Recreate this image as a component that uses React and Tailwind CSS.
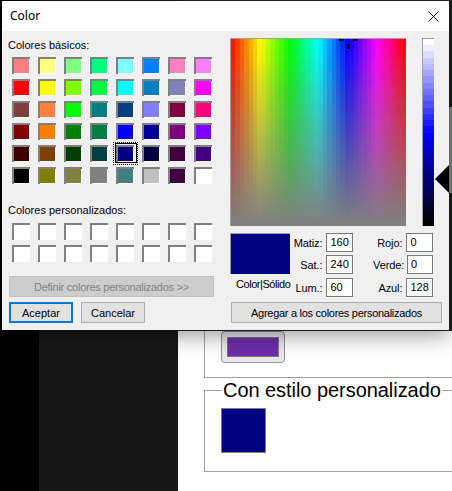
const BASIC = [
  ['#FF8080','#FFFF80','#80FF80','#00FF80','#80FFFF','#0080FF','#FF80C0','#FF80FF'],
  ['#FF0000','#FFFF00','#80FF00','#00FF40','#00FFFF','#0080C0','#8080C0','#FF00FF'],
  ['#804040','#FF8040','#00FF00','#008080','#004080','#8080FF','#800040','#FF0080'],
  ['#800000','#FF8000','#008000','#008040','#0000FF','#0000A0','#800080','#8000FF'],
  ['#400000','#804000','#004000','#004040','#000080','#000040','#400040','#400080'],
  ['#000000','#808000','#808040','#808080','#408080','#C0C0C0','#400040','#FFFFFF'],
];

function Swatch({ color, selected }) {
  return (
    <div className="relative w-[18px] h-[17px] shadow-[inset_2px_2px_0_#808080,inset_-1px_-1px_0_#ffffff]" style={{ backgroundColor: color }}>
      {selected && (
        <>
          <div className="absolute -left-[1px] -top-[2px] -right-[3px] -bottom-[1px] border border-black" />
          <div className="absolute -left-[3px] -top-[3px] -right-[4px] -bottom-[3px] border border-dotted border-black" />
        </>
      )}
    </div>
  );
}

function Spectrum() {
  const cols = 40, rows = 40, W = 175, H = 187;
  const cells = [];
  for (let r = 0; r < rows; r++) {
    for (let c = 0; c < cols; c++) {
      const x0 = Math.round((c * W) / cols), x1 = Math.round(((c + 1) * W) / cols);
      const y0 = Math.round((r * H) / rows), y1 = Math.round(((r + 1) * H) / rows);
      cells.push(
        <rect key={r + '-' + c} x={x0} y={y0} width={x1 - x0} height={y1 - y0}
          fill={`hsl(${(c / cols) * 360 + 4.5} ${100 - (r / (rows - 1)) * 100}% 50%)`} />
      );
    }
  }
  return (
    <div className="relative w-[176px] h-[188px] border-t border-l border-t-[#a0a0a0] border-l-[#a0a0a0]">
      <svg width="175" height="187" viewBox="0 0 175 187" shapeRendering="crispEdges" className="block">
        {cells}
        <rect x="108" y="0" width="5" height="2" fill="#000" />
        <rect x="122" y="0" width="5" height="2" fill="#000" />
        <rect x="116" y="5" width="3" height="5" fill="#000" />
      </svg>
    </div>
  );
}

function LumBar() {
  const n = 30;
  const bands = [];
  for (let i = 0; i < n; i++) {
    const y0 = Math.round((i * 187) / n), y1 = Math.round(((i + 1) * 187) / n);
    bands.push(<rect key={i} x="0" y={y0} width="11" height={y1 - y0} fill={`hsl(240 100% ${100 - (i / (n - 1)) * 100}%)`} />);
  }
  return (
    <div className="relative w-[12px] h-[188px] ml-[16px] border-t border-l border-t-[#a0a0a0] border-l-[#a0a0a0]">
      <svg width="11" height="187" viewBox="0 0 11 187" shapeRendering="crispEdges" className="block">{bands}</svg>
      <svg width="15" height="28" viewBox="0 0 15 28" className="absolute left-[12px] top-[126px]">
        <path d="M0 14 L14 0 L14 28 Z" fill="#000" />
      </svg>
    </div>
  );
}

function Field({ label, value }) {
  return (
    <div className="flex items-center justify-end">
      <span className="mr-[4px] w-[30px] text-right tracking-[-0.1px] whitespace-nowrap">{label}</span>
      <div className="w-[27px] h-[19px] border border-[#7a7a7a] bg-white pl-[3px] leading-[17px]">{value}</div>
    </div>
  );
}

export default function App() {
  return (
    <div className="relative w-[452px] h-[491px] overflow-hidden flex bg-white" style={{ fontFamily: '"Liberation Sans", Arial, sans-serif' }}>
      <div className="w-[39px] bg-black" />
      <div className="w-[139px] bg-[#171717]" />
      <div className="flex-1 min-w-0 flex flex-col bg-white">
        <div className="h-[107px] bg-[#1f1f1f]" />
        <div className="h-[86px] bg-[#8a8a8a]" />
        <div className="h-[138px] bg-[#1f1f1f]" />
        <div className="ml-[26px] w-[300px] h-[47px] border-l border-b border-r border-[#a0a0a0] pl-[16px]">
          <div className="w-[64px] h-[32px] rounded-[4px] border border-[#8f8f9d] bg-[#e9e9ed] p-[5px]">
            <div className="w-full h-full border border-[#767676] bg-[#6f2dab]" />
          </div>
        </div>
        <fieldset className="ml-[26px] mt-[1px] w-[300px] h-[93px] border border-[#a0a0a0] pl-[16px]">
          <legend className="ml-[1px] px-[1px] text-[20px] leading-[23px] tracking-[-0.05px] text-black">Con estilo personalizado</legend>
          <div className="mt-[6px] w-[45px] h-[45px] border border-[#808080] bg-[#000080]" />
        </fieldset>
      </div>

      <div className="absolute left-[2px] top-[1px] w-[447px] h-[329px] flex flex-col bg-[#f0f0f0] text-[11px] leading-[14px] text-black shadow-[0_4px_22px_rgba(0,0,0,0.45)]">
        <div className="h-[30px] bg-white flex items-center justify-between pl-[8px] pr-[10px]">
          <span className="text-[12px]" style={{ fontFamily: '"Noto Sans", sans-serif' }}>Color</span>
          <svg width="11" height="11" viewBox="0 0 11 11"><path d="M0.5 0.5 L10.5 10.5 M10.5 0.5 L0.5 10.5" stroke="#000" strokeWidth="1" fill="none" /></svg>
        </div>
        <div className="flex-1 flex">
          <div className="w-[228px] pl-[6px] pt-[7px]">
            <div>Colores básicos:</div>
            <div className="mt-[5px] ml-[4px] grid grid-cols-[repeat(8,18px)] gap-x-[8px] gap-y-[5px]">
              {BASIC.flat().map((c, i) => <Swatch key={i} color={c} selected={i === 36} />)}
            </div>
            <div className="mt-[19px]">Colores personalizados:</div>
            <div className="mt-[6px] ml-[4px] grid grid-cols-[repeat(8,18px)] gap-x-[8px] gap-y-[5px]">
              {Array.from({ length: 16 }).map((_, i) => <Swatch key={i} color="#ffffff" />)}
            </div>
            <div className="mt-[14px] ml-[1px] w-[205px] h-[21px] border border-[#bfbfbf] bg-[#cccccc] text-[#838383] flex items-center justify-center tracking-[-0.25px]">Definir colores personalizados &gt;&gt;</div>
            <div className="mt-[5px] ml-[1px] flex gap-[8px]">
              <div className="w-[64px] h-[21px] border-2 border-[#0078d7] bg-[#e1e1e1] flex items-center justify-center">Aceptar</div>
              <div className="w-[64px] h-[21px] border border-[#adadad] bg-[#e1e1e1] flex items-center justify-center">Cancelar</div>
            </div>
          </div>
          <div className="flex-1 pt-[7px]">
            <div className="flex">
              <Spectrum />
              <LumBar />
            </div>
            <div className="mt-[7px] flex">
              <div className="w-[60px]">
                <div className="h-[41px] border-t border-l border-[#a0a0a0] bg-[#000080]" />
                <div className="mt-[3px] pl-[6px] whitespace-nowrap tracking-[-0.45px]">Color|Sólido</div>
              </div>
              <div className="ml-[3px] w-[60px] flex flex-col">
                <Field label="Matiz:" value="160" />
                <div className="mt-[3px]"><Field label="Sat.:" value="240" /></div>
                <div className="mt-[4px]"><Field label="Lum.:" value="60" /></div>
              </div>
              <div className="ml-[20px] w-[60px] flex flex-col">
                <Field label="Rojo:" value="0" />
                <div className="mt-[3px]"><Field label="Verde:" value="0" /></div>
                <div className="mt-[4px]"><Field label="Azul:" value="128" /></div>
              </div>
            </div>
            <div className="mt-[5px] ml-[1px] w-[211px] h-[21px] border border-[#adadad] bg-[#e1e1e1] flex items-center justify-center tracking-[-0.28px]">Agregar a los colores personalizados</div>
          </div>
        </div>
      </div>
    </div>
  );
}
